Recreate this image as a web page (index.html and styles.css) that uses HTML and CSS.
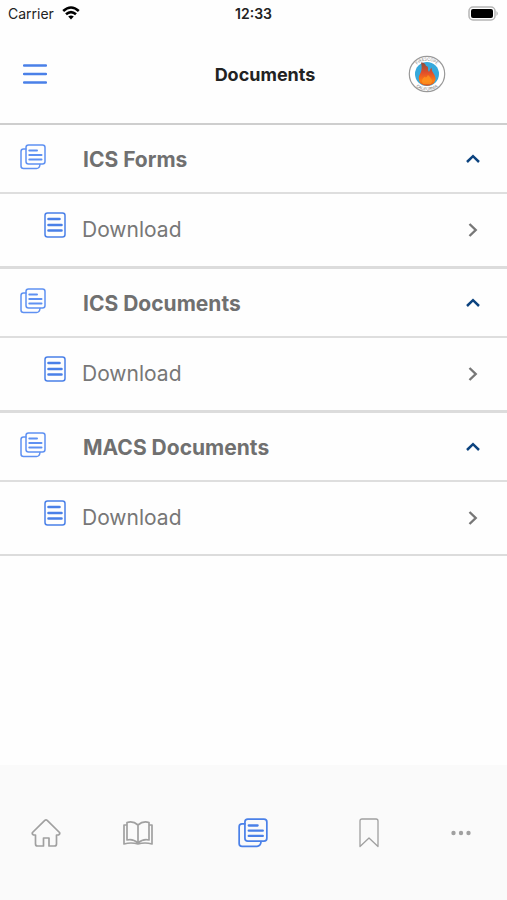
FILE: index.html
```html
<!DOCTYPE html>
<html lang="en">
<head>
    <meta charset="UTF-8">
    <meta name="viewport" content="width=device-width, initial-scale=1.0">
    <title>Documents</title>
    <link rel="stylesheet" href="styles.css">
</head>
<body>
    <!-- shared icons -->
    <svg class="sprite" aria-hidden="true">
        <symbol id="icon-docs" viewBox="0 0 26 26">
            <g fill="none" stroke="currentColor" stroke-linecap="round" stroke-linejoin="round">
                <rect x="6" y="1" width="19" height="19" rx="2.5" stroke-width="1.5"/>
                <path d="M6 5H3.5Q1 5 1 7.500V22Q1 24.500 3.500 24.500H16.500Q19.500 24.500 20 20.500" stroke-width="1.500"/>
                <path d="M9.300 6.500H17M9.300 11H21.500M9.300 15.500H21.500" stroke-width="2"/>
            </g>
        </symbol>
        <symbol id="icon-doc" viewBox="0 0 22 26">
            <g fill="none" stroke="currentColor" stroke-linecap="round">
                <rect x="1" y="1" width="20" height="24" rx="2.500" stroke-width="1.500"/>
                <path d="M4.500 7H15.500M4.500 13H17.500M4.500 18.500H17.500" stroke-width="2.600"/>
            </g>
        </symbol>
        <symbol id="icon-up" viewBox="0 0 16 10">
            <path d="M2 8L8 2.200L14 8" fill="none" stroke="currentColor" stroke-width="2.500"/>
        </symbol>
        <symbol id="icon-next" viewBox="0 0 10 16">
            <path d="M1.500 2L7.700 8L1.500 14" fill="none" stroke="currentColor" stroke-width="2.400"/>
        </symbol>
    </svg>

    <div class="status-bar">
        <div class="carrier">
            <span>Carrier</span>
            <svg width="18" height="14" viewBox="0 0 18 14" aria-hidden="true">
                <path d="M1.200 5Q9 -2 16.800 5M4 8.300Q9 3.800 14 8.300" fill="none" stroke="#000" stroke-width="2.600"/>
                <path d="M6.200 10.600Q9 8.300 11.800 10.600L9 13.500Z"/>
            </svg>
        </div>
        <span class="time">12:33</span>
        <svg class="battery" width="31" height="15" viewBox="0 0 31 15" aria-hidden="true">
            <rect x="1" y="1" width="26" height="13" rx="4" fill="#fff" stroke="#b5b5b5" stroke-width="1.500"/>
            <rect x="3" y="3" width="22" height="9" rx="2"/>
            <path d="M28.500 5Q31 7.500 28.500 10Z" fill="#aaa"/>
        </svg>
    </div>

    <header class="header">
        <button type="button" class="menu-btn" aria-label="Menu">
            <svg width="24" height="22" viewBox="0 0 24 22">
                <path d="M1 2.500H23M1 11H23M1 19.500H23" stroke="currentColor" stroke-width="2.400" stroke-linecap="round"/>
            </svg>
        </button>
        <h1>Documents</h1>
        <svg class="logo" width="38" height="38" viewBox="0 0 38 38" role="img" aria-label="FIRESCOPE California">
            <defs>
                <path id="arc-top" d="M5.500 19A13.500 13.500 0 0 1 32.500 19"/>
                <path id="arc-bottom" d="M2.500 19A16.500 16.500 0 0 0 35.500 19"/>
                <linearGradient id="flame" x1="0" y1="0" x2="0" y2="1">
                    <stop offset="0" stop-color="#8c4a3c"/>
                    <stop offset="0.450" stop-color="#e2502a"/>
                    <stop offset="0.800" stop-color="#ff7d12"/>
                    <stop offset="1" stop-color="#d9541e"/>
                </linearGradient>
            </defs>
            <circle cx="19" cy="19" r="17.700" fill="#fff" stroke="#999" stroke-width="1.200"/>
            <circle cx="19" cy="19" r="12" fill="#36a9dc"/>
            <path d="M13 7.500Q17 7 18 11Q20.500 11 20 15L21 17Q22 14 23.500 12.500Q23.300 16 26.500 20Q29.500 26 24 29.500Q18 32.500 12.500 28.500Q9 23.500 12.500 18Q14.500 14 13 7.500Z" fill="url(#flame)"/>
            <path d="M15 29Q12 25 17 21.500Q18 24 20 20Q26 25 23 29Z" fill="#ff981f" opacity="0.700"/>
            <g class="logo-text" text-anchor="middle">
                <text><textPath href="#arc-top" startOffset="50%">FIRESCOPE</textPath></text>
                <text><textPath href="#arc-bottom" startOffset="50%">CALIFORNIA</textPath></text>
            </g>
        </svg>
    </header>

    <main>
        <section class="group">
            <h2>
                <button type="button" class="group-head" aria-expanded="true">
                    <svg class="docs"><use href="#icon-docs"/></svg>
                    <span>ICS Forms</span>
                    <svg class="up"><use href="#icon-up"/></svg>
                </button>
            </h2>
            <a href="#" class="row">
                <svg class="doc"><use href="#icon-doc"/></svg>
                <span>Download</span>
                <svg class="next"><use href="#icon-next"/></svg>
            </a>
        </section>
        <section class="group">
            <h2>
                <button type="button" class="group-head" aria-expanded="true">
                    <svg class="docs"><use href="#icon-docs"/></svg>
                    <span>ICS Documents</span>
                    <svg class="up"><use href="#icon-up"/></svg>
                </button>
            </h2>
            <a href="#" class="row">
                <svg class="doc"><use href="#icon-doc"/></svg>
                <span>Download</span>
                <svg class="next"><use href="#icon-next"/></svg>
            </a>
        </section>
        <section class="group">
            <h2>
                <button type="button" class="group-head" aria-expanded="true">
                    <svg class="docs"><use href="#icon-docs"/></svg>
                    <span>MACS Documents</span>
                    <svg class="up"><use href="#icon-up"/></svg>
                </button>
            </h2>
            <a href="#" class="row">
                <svg class="doc"><use href="#icon-doc"/></svg>
                <span>Download</span>
                <svg class="next"><use href="#icon-next"/></svg>
            </a>
        </section>
    </main>

    <nav class="tabs">
        <a href="#" aria-label="Home">
            <svg width="30" height="30" viewBox="0 0 30 30" fill="none" stroke="currentColor" stroke-width="1.700" stroke-linejoin="round">
                <path d="M13.800 2.300Q15 1.300 16.200 2.300L28.500 14.500Q29.300 16 27.500 17H25.500V26Q25.500 28 23.500 28H18V20H12.500V28H6.500Q4.500 28 4.500 26V17H2.500Q0.700 16 1.500 14.500Z"/>
            </svg>
        </a>
        <a href="#" aria-label="Library">
            <svg width="30" height="26" viewBox="0 0 30 26" fill="none" stroke="currentColor" stroke-width="1.700" stroke-linejoin="round">
                <path d="M15 5Q10 0.500 4 2.500V20Q10 18.500 15 23Q20 18.500 26 20V2.500Q20 0.500 15 5V23"/>
                <path d="M4 5H1V24Q8 22 15 24Q22 22 29 24V5H26"/>
            </svg>
        </a>
        <a href="#" class="active" aria-label="Documents" aria-current="page">
            <svg width="30" height="30"><use href="#icon-docs"/></svg>
        </a>
        <a href="#" aria-label="Bookmarks">
            <svg width="20" height="30" viewBox="0 0 20 30" fill="none" stroke="currentColor" stroke-width="1.300" stroke-linejoin="round">
                <path d="M1 28.500V3Q1 1 3 1H17Q19 1 19 3V28.500L10 20Z"/>
            </svg>
        </a>
        <a href="#" aria-label="More">
            <svg width="20" height="6" viewBox="0 0 20 6" fill="currentColor">
                <circle cx="2.500" cy="3" r="2.200"/>
                <circle cx="10" cy="3" r="2.200"/>
                <circle cx="17.500" cy="3" r="2.200"/>
            </svg>
        </a>
    </nav>
</body>
</html>
```
FILE: styles.css
```css
* {
    box-sizing: border-box;
}
body {
    display: flex;
    flex-direction: column;
    min-height: 100vh;
    margin: 0;
    background-color: #fefefe;
    font-family: Inter, sans-serif;
    color: #707070;
}
svg {
    display: block;
}
.sprite {
    position: absolute;
    width: 0;
    height: 0;
}
.status-bar {
    display: grid;
    grid-template-columns: 1fr auto 1fr;
    align-items: center;
    height: 26px;
    padding: 0 8px;
    font-size: 14px;
    color: #222;
}
.carrier {
    display: flex;
    align-items: center;
    gap: 8px;
}
.time {
    font-weight: 600;
}
.battery {
    justify-self: end;
}
.header {
    display: grid;
    grid-template-columns: 1fr auto 1fr;
    align-items: center;
    height: 99px;
    padding: 0 0 2px 23px;
    border-bottom: 2px solid #cecece;
}
.header h1 {
    margin: 0;
    padding-top: 2px;
    font-size: 18px;
    font-weight: 700;
    line-height: 24px;
    color: #222;
}
.menu-btn {
    justify-self: start;
    padding: 0;
    border: none;
    background: none;
    color: #4a80e8;
    cursor: pointer;
}
.logo {
    justify-self: end;
    margin-right: 61px;
}
.logo-text {
    font-size: 4px;
    fill: #777;
}
.group {
    border-bottom: 3px solid #dcdcdc;
}
.group:last-child {
    border-bottom-width: 2px;
}
.group h2 {
    margin: 0;
}
.group-head,
.row {
    display: grid;
    align-items: center;
    width: 100%;
    font-size: 21px;
    line-height: 28px;
}
.group-head {
    grid-template-columns: 63px 1fr 16px;
    height: 69px;
    padding: 0 26px 0 20px;
    border: none;
    border-bottom: 2px solid #dedede;
    background: none;
    font-family: inherit;
    font-weight: 700;
    text-align: left;
    color: #707070;
    cursor: pointer;
}
.group-head span {
    padding-top: 2px;
}
.row {
    grid-template-columns: 38px 1fr 10px;
    height: 72px;
    padding: 0 29px 0 44px;
    color: #777;
    text-decoration: none;
}
.docs {
    width: 26px;
    height: 26px;
    margin-bottom: 4px;
    color: #5f91f2;
}
.doc {
    width: 22px;
    height: 26px;
    margin-bottom: 10px;
    color: #4a80e8;
}
.up {
    width: 16px;
    height: 10px;
    color: #0c437f;
}
.next {
    width: 10px;
    height: 16px;
    color: #777;
}
.tabs {
    display: grid;
    grid-template-columns: 2fr 2fr 3fr 2fr 2fr;
    align-items: center;
    height: 135px;
    margin-top: auto;
    background-color: #fafafa;
}
.tabs a {
    display: flex;
    justify-content: center;
    color: #a0a0a0;
}
.tabs .active {
    color: #4a80e8;
}
```
